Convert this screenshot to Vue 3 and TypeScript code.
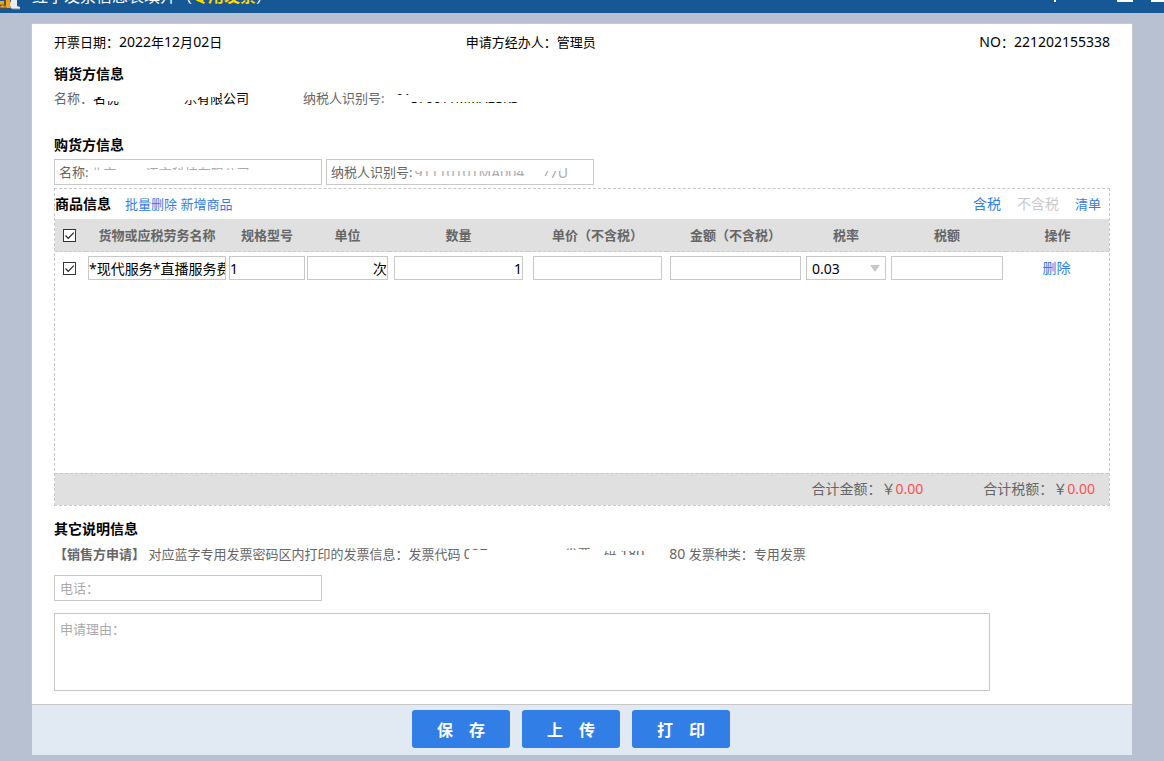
<script setup lang="ts">
import { ref } from 'vue'

interface Item {
  checked: boolean
  name: string
  spec: string
  unit: string
  qty: string
  price: string
  amount: string
  rate: string
  tax: string
}

const allChecked = ref(true)
const phone = ref('')
const reason = ref('')
const buyerName = ref('北京一　 语言科技有限公司')
const buyerTaxId = ref('91110101MA004　 77U')
const items = ref<Item[]>([
  { checked: true, name: '*现代服务*直播服务费', spec: '1', unit: '次', qty: '1', price: '', amount: '', rate: '0.03', tax: '' },
])
const actions = ['保\u2003存', '上\u2003传', '打\u2003印']
</script>

<template>
  <div class="page">
    <header class="titlebar">
      <svg class="logo" width="22" height="12" viewBox="0 0 22 12" aria-hidden="true">
        <path d="M0 1h4v4H0zM1 5h5V0h4v2h7v3h-6v3H8L6 8H0z" fill="#f2a51c" />
        <path d="M0 5h6M5 0v7M0 8h7" stroke="#7a5312" stroke-width="1" />
        <path d="M11 0h6v6l3 1v2h-7c-2 0-3-1-3-3z" fill="#e9edf3" />
        <path d="M10 6c1 3 2 3 4 3h6" stroke="#7f8a9a" fill="none" />
      </svg>
      <h1>红字发票信息表填开（<b>专用发票</b>）</h1>
      <svg class="window-icons" width="112" height="12" viewBox="0 0 112 12" aria-hidden="true">
        <path d="M2 0h2v2H2zM65 0h16v2H65zM99 0h13v2H99z" fill="#fff" />
      </svg>
    </header>

    <main class="card">
      <div class="content">
        <div class="meta">
          <span>开票日期：<i>2022</i>年<i>12</i>月<i>02</i>日</span>
          <span>申请方经办人：管理员</span>
          <span><i>NO</i>：<i>221202155338</i></span>
        </div>

        <h2 class="seller-title">销货方信息</h2>
        <div class="seller">
          <span>名称<span class="dot">：</span></span>
          <span class="seller-name"><span class="cut-a">名优</span><span class="cut-b">乐有限公司</span></span>
          <span class="seller-id">纳税人识别号:</span>
          <span class="seller-no"><span class="cut-c">91</span><span class="cut-d">370611MMABSKS</span></span>
        </div>

        <h2 class="buyer-title">购货方信息</h2>
        <div class="buyer">
          <label class="field">名称:<input v-model="buyerName" class="cut-name" type="text" /></label>
          <label class="field">纳税人识别号:<input v-model="buyerTaxId" class="cut-id" type="text" /></label>
        </div>

        <section class="goods">
          <div class="toolbar">
            <h2>商品信息</h2>
            <div class="links"><a href="#">批量删除</a> <a href="#">新增商品</a></div>
            <div class="modes">
              <a href="#" class="big">含税</a>
              <a href="#" class="big off">不含税</a>
              <a href="#">清单</a>
            </div>
          </div>
          <div class="rows">
            <table>
              <colgroup>
                <col class="c-check" /><col class="c-name" /><col class="c-spec" /><col class="c-unit" />
                <col class="c-qty" /><col class="c-price" /><col class="c-amount" /><col class="c-rate" />
                <col class="c-tax" /><col class="c-op" />
              </colgroup>
              <thead>
                <tr>
                  <th>
                    <label class="check">
                      <input v-model="allChecked" type="checkbox" aria-label="全选" />
                      <svg v-if="allChecked" viewBox="0 0 13 13" aria-hidden="true"><path d="M2.5 6.5 5.2 9.3 10.8 3.7" /></svg>
                    </label>
                  </th>
                  <th>货物或应税劳务名称</th>
                  <th>规格型号</th>
                  <th>单位</th>
                  <th>数量</th>
                  <th>单价（不含税）</th>
                  <th>金额（不含税）</th>
                  <th>税率</th>
                  <th>税额</th>
                  <th>操作</th>
                </tr>
              </thead>
              <tbody>
                <tr v-for="(item, i) in items" :key="i">
                  <td>
                    <label class="check">
                      <input v-model="item.checked" type="checkbox" aria-label="选择" />
                      <svg v-if="item.checked" viewBox="0 0 13 13" aria-hidden="true"><path d="M2.5 6.5 5.2 9.3 10.8 3.7" /></svg>
                    </label>
                  </td>
                  <td><input v-model="item.name" class="cell" type="text" aria-label="货物或应税劳务名称" /></td>
                  <td class="snug"><input v-model="item.spec" class="cell" type="text" aria-label="规格型号" /></td>
                  <td class="snug"><input v-model="item.unit" class="cell right" type="text" aria-label="单位" /></td>
                  <td class="wide"><input v-model="item.qty" class="cell right" type="text" aria-label="数量" /></td>
                  <td class="wide"><input v-model="item.price" class="cell right" type="text" aria-label="单价" /></td>
                  <td class="mid"><input v-model="item.amount" class="cell right" type="text" aria-label="金额" /></td>
                  <td>
                    <div class="rate">
                      <select v-model="item.rate" aria-label="税率">
                        <option>0.03</option>
                        <option>0.06</option>
                        <option>0.13</option>
                      </select>
                      <svg width="10" height="7" viewBox="0 0 10 7" aria-hidden="true"><path d="M0 0h10L5 7z" fill="#c8c8c8" /></svg>
                    </div>
                  </td>
                  <td class="mid"><input v-model="item.tax" class="cell right" type="text" aria-label="税额" /></td>
                  <td><a href="#" class="big">删除</a></td>
                </tr>
              </tbody>
            </table>
          </div>
          <div class="totals">
            <span>合计金额：￥<em>0.00</em></span>
            <span>合计税额：￥<em>0.00</em></span>
          </div>
        </section>

        <h2 class="other-title">其它说明信息</h2>
        <p class="note">
          <strong>【销售方申请】</strong> 对应蓝字专用发票密码区内打印的发票信息：发票代码
          <span class="cut-e"><i>037</i></span><span class="cut-f">发票</span><span class="cut-g">码 <i>180</i></span><span class="tail"><i>80</i> 发票种类：专用发票</span>
        </p>
        <input v-model="phone" class="phone" type="text" placeholder="电话：" aria-label="电话" />
        <textarea v-model="reason" class="reason" placeholder="申请理由：" aria-label="申请理由"></textarea>
      </div>
    </main>
    <footer class="actions">
      <button v-for="a in actions" :key="a" type="button">{{ a }}</button>
    </footer>
  </div>
</template>

<style>
body {
  background: #b8c1d1;
}
</style>

<style scoped>
* {
  box-sizing: border-box;
}
.page {
  min-height: 100vh;
  background: #b8c1d1;
  color: #000;
  font: 13px/20px "Noto Sans", "Noto Sans CJK SC", sans-serif;
}
i {
  font-size: 14px;
  font-style: normal;
}
input,
select,
textarea,
button {
  font-family: inherit;
  margin: 0;
}
a {
  color: #317ee7;
  text-decoration: none;
}
.big {
  font-size: 14px;
}
h2 {
  margin: 0;
  font-size: 14px;
  line-height: 20px;
  font-weight: 700;
}
.titlebar {
  display: flex;
  align-items: flex-end;
  height: 13px;
  overflow: hidden;
  background: #165795;
  color: #fff;
}
.logo {
  margin-right: 10px;
  align-self: flex-start;
}
.titlebar h1 {
  flex: 1;
  margin: 0;
  padding-bottom: 7px;
  font-size: 16px;
  line-height: 20px;
  font-weight: 400;
}
.titlebar b {
  color: #ffd800;
}
.window-icons {
  align-self: flex-start;
}
.card {
  margin: 10px 31px 0;
  border: 1px solid #c8c8c8;
  background: #fff;
}
.content {
  padding: 8px 22px 13px;
}
.meta {
  display: grid;
  grid-template-columns: 39% 1fr auto;
}
.seller-title {
  margin-top: 12px;
}
.seller {
  display: flex;
  margin-top: 4px;
  color: #666;
}
.dot {
  clip-path: inset(11px 0 0 0);
  display: inline-block;
}
.seller-name {
  width: 210px;
  color: #000;
}
.seller-name span,
.seller-no span,
.note span {
  display: inline-block;
}
.cut-a {
  clip-path: polygon(0 9px, 13px 9px, 13px 13px, 100% 13px, 100% 17px, 0 17px);
  margin-right: 65px;
}
.cut-b {
  clip-path: polygon(0 12px, 13px 12px, 13px 9px, 36px 9px, 36px 5px, 100% 5px, 100% 17px, 0 17px);
}
.seller-id {
  width: 93px;
}
.seller-no {
  color: #000;
}
.cut-c {
  clip-path: inset(5px 0 13px 0);
}
.cut-d {
  clip-path: inset(14px 0 3px 0);
}
.buyer-title {
  margin-top: 27px;
}
.buyer {
  display: flex;
  gap: 4px;
  margin-top: 4px;
}
.field {
  display: flex;
  align-items: center;
  width: 268px;
  height: 26px;
  padding: 0 5px 0 4px;
  border: 1px solid #c8c8c8;
  color: #666;
}
.field input {
  flex: 1;
  min-width: 0;
  height: 20px;
  padding: 0 0 0 2px;
  border: 0;
  outline: 0;
  background: transparent;
  color: #aaa;
  font-size: 13px;
}
.field .cut-name {
  clip-path: polygon(0 4px, 100% 4px, 100% 17px, 165px 17px, 165px 8px, 0 8px);
}
.field .cut-id {
  font-size: 14px;
  clip-path: polygon(0 9px, 148px 9px, 148px 4px, 100% 4px, 100% 16px, 136px 16px, 136px 14px, 0 14px);
}
.goods {
  margin-top: 3px;
  border: 1px dashed #c8c8c8;
}
.toolbar {
  display: flex;
  align-items: center;
  height: 30px;
}
.links {
  margin-left: 14px;
}
.modes {
  display: flex;
  gap: 16px;
  margin-left: auto;
  padding-right: 8px;
}
.off {
  color: #c8c8c8;
}
.rows {
  min-height: 254px;
}
table {
  width: 100%;
  table-layout: fixed;
  border-collapse: separate;
  border-spacing: 0;
}
.c-check { width: 31px; }
.c-name { width: 142px; }
.c-spec { width: 78px; }
.c-unit { width: 83px; }
.c-qty { width: 139px; }
.c-price { width: 139px; }
.c-amount { width: 137px; }
.c-rate { width: 84px; }
.c-tax { width: 118px; }
.c-op { width: 103px; }
th {
  height: 33px;
  padding: 0;
  border-bottom: 1px dashed #c8c8c8;
  background: #e0e0e0;
  color: #666;
  font-weight: 700;
  white-space: nowrap;
}
td {
  height: 32px;
  padding: 0 2px;
  text-align: center;
}
td.snug {
  padding: 0 1px;
}
td.wide {
  padding: 0 5px;
}
td.mid {
  padding: 0 3px;
}
td:last-child {
  padding-right: 4px;
}
.check {
  display: grid;
  place-items: center;
  padding-right: 2px;
}
.check input,
.check svg {
  grid-area: 1 / 1;
  width: 13px;
  height: 13px;
}
.check input {
  appearance: none;
  border: 1px solid #333;
  background: #fff;
}
.check svg {
  pointer-events: none;
}
.check path {
  fill: none;
  stroke: #222;
  stroke-width: 1.2;
}
.cell,
.rate select {
  display: block;
  width: 100%;
  height: 24px;
  padding: 0;
  border: 1px solid #c8c8c8;
  border-radius: 0;
  background: #fff;
  color: #000;
  font-size: 14px;
}
.right {
  text-align: right;
}
.rate {
  display: grid;
  align-items: center;
}
.rate select,
.rate svg {
  grid-area: 1 / 1;
}
.rate select {
  appearance: none;
  padding-left: 5px;
}
.rate svg {
  justify-self: end;
  margin-right: 6px;
  pointer-events: none;
}
.totals {
  display: flex;
  justify-content: flex-end;
  gap: 60px;
  padding: 5px 14px 6px;
  border-top: 1px dashed #c8c8c8;
  background: #e0e0e0;
  color: #666;
  font-size: 14px;
}
.totals em {
  color: #ff5050;
  font-style: normal;
}
.other-title {
  margin-top: 13px;
}
.note {
  margin: 5px 0 0;
  color: #666;
}
.note .cut-e {
  clip-path: polygon(0 0, 100% 0, 100% 6px, 5px 6px, 5px 16px, 0 16px);
}
.note .cut-f {
  margin-left: 77px;
  clip-path: inset(4px 0 14px 0);
}
.note .cut-g {
  margin-left: 13px;
  clip-path: inset(7px 0 9px 0);
}
.note .tail {
  margin-left: 25px;
}
.phone,
.reason {
  display: block;
  border: 1px solid #c8c8c8;
  border-radius: 0;
  background: #fff;
  font-size: 13px;
  line-height: 20px;
}
.phone {
  width: 268px;
  height: 26px;
  margin-top: 11px;
  padding: 0 5px;
}
.reason {
  width: 936px;
  max-width: 100%;
  height: 78px;
  margin-top: 12px;
  padding: 5px;
  resize: none;
}
.phone::placeholder,
.reason::placeholder {
  color: #aaa;
}
.actions {
  display: flex;
  justify-content: center;
  gap: 12px;
  margin: 0 32px;
  padding: 5px 22px 7px 0;
  background: #e1e9f3;
}
.actions button {
  width: 98px;
  height: 38px;
  padding: 0;
  border: 0;
  border-radius: 3px;
  background: #317ee7;
  color: #fff;
  font-size: 16px;
  font-weight: 700;
}
</style>
